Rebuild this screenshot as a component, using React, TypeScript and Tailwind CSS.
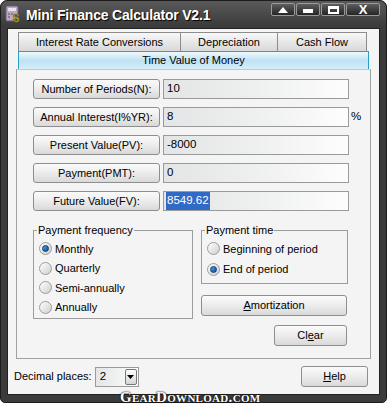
import React from 'react';

const font = { fontFamily: '"Liberation Sans", Arial, sans-serif' };

function AppIcon() {
  return (
    <svg width="17" height="18" viewBox="0 0 17 18">
      <rect x="1" y="1" width="12" height="15" rx="1.5" fill="#b9a9c4" stroke="#6b5a78" />
      <rect x="3" y="3" width="8" height="3" fill="#e9e4ee" />
      <rect x="3" y="8" width="2" height="2" fill="#8a7a96" />
      <rect x="6" y="8" width="2" height="2" fill="#8a7a96" />
      <rect x="3" y="11" width="2" height="2" fill="#8a7a96" />
      <text x="8" y="17" fontSize="11" fontWeight="bold" fill="#e6d22a" stroke="#4a4a10" strokeWidth="0.6" style={font}>$</text>
    </svg>
  );
}

function TitleButton({ children, wide }: { children: React.ReactNode; wide?: boolean }) {
  return (
    <div
      className={`h-[13px] ${wide ? 'w-[34px]' : 'w-[24px]'} flex items-center justify-center border border-[#9a9a9a] rounded-[2px] bg-gradient-to-b from-[#5e5e5e] to-[#262626]`}
    >
      {children}
    </div>
  );
}

function Button({ children, className = '' }: { children: React.ReactNode; className?: string }) {
  return (
    <div
      className={`flex items-center justify-center border border-[#8e8e8e] rounded-[3px] bg-gradient-to-b from-[#fbfbfb] via-[#ececec] to-[#d9d9d9] text-[11px] text-black ${className}`}
    >
      {children}
    </div>
  );
}

function Field({ label, value, selected, suffix }: { label: string; value: string; selected?: boolean; suffix?: string }) {
  return (
    <div className="flex items-center h-[20px]">
      <Button className="w-[127px] h-[20px]">{label}</Button>
      <div className="ml-[3px] w-[186px] h-[20px] border border-[#9a9a9a] bg-gradient-to-r from-[#e3e5e6] via-[#eef0ef] to-[#fdfdfd] flex items-center px-[2px] text-[11.5px]">
        {selected ? <span className="bg-[#3169c6] text-white px-[1px]">{value}</span> : <span className="px-[1px]">{value}</span>}
      </div>
      {suffix && <span className="ml-[2px] text-[11.5px]">{suffix}</span>}
    </div>
  );
}

function Radio({ label, checked }: { label: string; checked?: boolean }) {
  return (
    <div className="flex items-center h-[19.6px] text-[11px]">
      <div className="w-[13px] h-[13px] rounded-full border border-[#9c9c9c] bg-gradient-to-br from-[#ffffff] to-[#cfcfcf] flex items-center justify-center">
        {checked && <div className="w-[7px] h-[7px] rounded-full bg-gradient-to-br from-[#4fa3e8] to-[#0b4e9a] border border-[#083a72]" />}
      </div>
      <span className="ml-[3px]">{label}</span>
    </div>
  );
}

export default function App() {
  return (
    <div className="w-[387px] h-[407px] bg-white relative" style={font}>
      <div className="h-[403px] bg-[#3b3b3b] rounded-t-[7px] rounded-b-[5px] flex flex-col border border-[#1c1c1c]">
        {/* title bar */}
        <div className="h-[26px] flex items-start bg-gradient-to-b from-[#5a5a5a] to-[#3a3a3a] rounded-t-[7px] px-[4px]">
          <div className="mt-[4px]"><AppIcon /></div>
          <span className="ml-[4px] mt-[5px] text-white font-bold text-[14px] tracking-[-0.2px] leading-[18px] [text-shadow:1px_1px_1px_#000]">
            Mini Finance Calculator V2.1
          </span>
          <div className="ml-auto mt-[2px] mr-[2px] flex gap-[1px]">
            <TitleButton>
              <svg width="10" height="6" viewBox="0 0 10 6"><path d="M0 6 L5 0 L10 6 Z" fill="#fff" /></svg>
            </TitleButton>
            <TitleButton>
              <div className="w-[10px] h-[4px] bg-white mt-[3px]" />
            </TitleButton>
            <TitleButton>
              <div className="w-[11px] h-[8px] border-2 border-white border-t-[3px]" />
            </TitleButton>
            <TitleButton wide>
              <span className="text-white font-bold text-[13px] leading-none">X</span>
            </TitleButton>
          </div>
        </div>

        {/* client area */}
        <div className="flex-1 mx-[6px] mb-[7px] mt-[1px] bg-[#f4f4f4] border border-[#222] flex flex-col">
          {/* tabs */}
          <div className="mt-[3px] mx-[10px] flex flex-col">
            <div className="flex h-[19px] text-[11px]">
              <div className="w-[163px] border border-[#8c8c8c] border-b-0 bg-gradient-to-b from-[#f8f8f8] to-[#d8d8d8] flex items-center justify-center">Interest Rate Conversions</div>
              <div className="w-[97px] border border-l-0 border-[#8c8c8c] border-b-0 bg-gradient-to-b from-[#f8f8f8] to-[#d8d8d8] flex items-center justify-center">Depreciation</div>
              <div className="w-[89px] border border-l-0 border-[#8c8c8c] border-b-0 bg-gradient-to-b from-[#f8f8f8] to-[#d8d8d8] flex items-center justify-center">Cash Flow</div>
            </div>
            <div className="h-[18px] border border-[#2aa0c8] border-b-0 bg-gradient-to-b from-[#eef8fc] via-[#bfe2f3] to-[#d6eef9] flex items-center justify-center text-[11px]">
              Time Value of Money
            </div>
          </div>

          {/* pane */}
          <div className="mx-[8px] h-[290px] border border-[#a0a0a0] border-t-[#c8c8c8] pl-[16px] pt-[9px] flex flex-col">
            <div className="flex flex-col gap-[8px]">
              <Field label="Number of Periods(N):" value="10" />
              <Field label="Annual Interest(I%YR):" value="8" suffix="%" />
              <Field label="Present Value(PV):" value="-8000" />
              <Field label="Payment(PMT):" value="0" />
              <Field label="Future Value(FV):" value="8549.62" selected />
            </div>

            <div className="flex mt-[12px] gap-[8px]">
              <fieldset className="w-[160px] h-[96px] border border-[#9c9c9c] pl-[5px] pt-[2px]">
                <legend className="ml-[-2px] px-[1px] text-[11px] leading-[14px]">Payment frequency</legend>
                <div className="flex flex-col">
                  <Radio label="Monthly" checked />
                  <Radio label="Quarterly" />
                  <Radio label="Semi-annually" />
                  <Radio label="Annually" />
                </div>
              </fieldset>
              <div className="flex flex-col">
                <fieldset className="w-[147px] h-[61px] border border-[#9c9c9c] pl-[5px] pt-[2px]">
                  <legend className="ml-[-2px] px-[1px] text-[11px] leading-[14px]">Payment time</legend>
                  <div className="flex flex-col gap-[1px]">
                    <Radio label="Beginning of period" />
                    <Radio label="End of period" checked />
                  </div>
                </fieldset>
                <Button className="mt-[11px] w-[146px] h-[21px]">
                  <span><span className="underline">A</span>mortization</span>
                </Button>
                <Button className="mt-[9px] ml-[73px] w-[73px] h-[21px]">
                  <span>Cl<span className="underline">e</span>ar</span>
                </Button>
              </div>
            </div>
          </div>

          {/* bottom row */}
          <div className="mt-[7px] ml-[6px] mr-[11px] flex items-center text-[11px]">
            <span>Decimal places:</span>
            <div className="ml-[3px] w-[44px] h-[20px] border border-[#9a9a9a] bg-gradient-to-r from-[#e3e5e6] to-[#fdfdfd] flex items-center">
              <span className="ml-[4px] flex-1 text-[11.5px]">2</span>
              <div className="w-[12px] h-[16px] mr-[1px] border border-[#777] rounded-[2px] bg-gradient-to-b from-[#ffffff] to-[#d6d6d6] flex items-center justify-center">
                <svg width="7" height="4" viewBox="0 0 7 4"><path d="M0 0 L7 0 L3.5 4 Z" fill="#000" /></svg>
              </div>
            </div>
            <Button className="ml-auto w-[67px] h-[21px]">
              <span><span className="underline">H</span>elp</span>
            </Button>
          </div>
        </div>
      </div>

      {/* watermark */}
      <div className="absolute left-[120px] top-[390px] text-[15px] font-bold tracking-[0.3px] text-white [font-variant:small-caps] [text-shadow:0_0_2px_#000,0_0_1px_#000] leading-none" style={{ fontFamily: '"Liberation Serif", serif' }}>
        GearDownload.com
      </div>
    </div>
  );
}
